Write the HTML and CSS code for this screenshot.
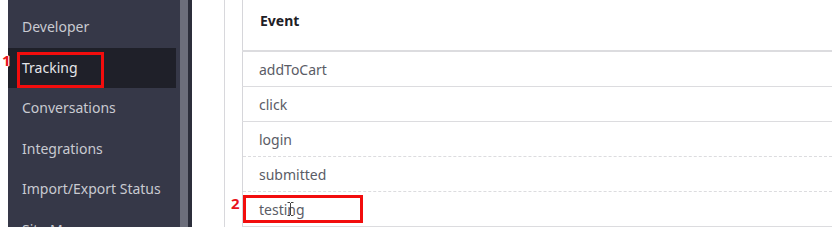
FILE: index.html
```html
<!DOCTYPE html>
<html lang="en">
<head>
    <meta charset="UTF-8">
    <title>Tracking - Events</title>
    <link rel="stylesheet" href="styles.css">
</head>
<body>
    <div class="edge"></div>

    <!-- Sidebar navigation -->
    <nav class="sidebar">
        <ul class="nav-list">
            <li class="nav-item">Developer</li>
            <li class="nav-item active">
                Tracking
                <span class="step step-1">1</span>
                <span class="mark mark-1"></span>
            </li>
            <li class="nav-item">Conversations</li>
            <li class="nav-item">Integrations</li>
            <li class="nav-item">Import/Export Status</li>
            <li class="nav-item">Site Map</li>
        </ul>
    </nav>
    <div class="scrollbar"></div>

    <!-- Events table -->
    <main class="content">
        <div class="panel">
            <table class="events">
                <thead>
                    <tr><th>Event</th></tr>
                </thead>
                <tbody>
                    <tr><td>addToCart</td></tr>
                    <tr><td>click</td></tr>
                    <tr class="dashed"><td>login</td></tr>
                    <tr class="dashed"><td>submitted</td></tr>
                    <tr>
                        <td>
                            testing
                            <svg class="caret" width="7" height="14" viewBox="0 0 7 14">
                                <path d="M0.5 0.5h2.5M4 0.5h2.5M3.5 1v12M0.5 13.5h2.5M4 13.5h2.5" stroke="#444" stroke-width="1" fill="none"/>
                            </svg>
                            <span class="step step-2">2</span>
                            <span class="mark mark-2"></span>
                        </td>
                    </tr>
                </tbody>
            </table>
        </div>
    </main>
</body>
</html>
```

FILE: styles.css
```css
body {
    margin: 0;
    padding: 0;
    display: flex;
    height: 227px;
    overflow: hidden;
    background-color: #ffffff;
    font-family: "Noto Sans", Arial, sans-serif;
}

.edge {
    width: 8px;
    flex-shrink: 0;
    background-color: #ffffff;
}

.sidebar {
    width: 172px;
    flex-shrink: 0;
    background-color: #363848;
}

.nav-list {
    list-style: none;
    margin: 0;
    padding: 7px 0 0 0;
}

.nav-item {
    position: relative;
    height: 40.5px;
    line-height: 40px;
    padding-left: 14px;
    font-size: 14px;
    color: #c9cad1;
    white-space: nowrap;
}

.nav-item.active {
    background-color: #1f2029;
    margin-right: 4px;
    color: #e4e5ea;
}

.scrollbar {
    width: 8px;
    flex-shrink: 0;
    background-color: #6c6e7b;
    border-right: 4px solid #2c2e3b;
}

.content {
    flex: 1;
    padding-left: 32px;
    background-color: #ffffff;
}

.panel {
    height: 100%;
    border-left: 1px solid #d8d8dc;
    padding-left: 17px;
}

.events {
    width: 100%;
    border-collapse: collapse;
    border-left: 1px solid #d6d6da;
}

.events th {
    height: 51px;
    padding: 0 0 10px 17px;
    text-align: left;
    font-size: 14px;
    font-weight: bold;
    color: #1e2026;
    border-bottom: 2px solid #dcdcdf;
    box-sizing: border-box;
}

.events td {
    position: relative;
    height: 34px;
    padding: 0 0 0 16px;
    font-size: 14px;
    color: #5a5c66;
    border-bottom: 1px solid #dcdcdf;
}

.events tr.dashed td {
    border-bottom: 1px dashed #dcdcdf;
}

/* annotation overlays */
.step {
    position: absolute;
    font-size: 15px;
    font-weight: bold;
    line-height: 1;
    color: #e8141b;
    text-shadow: 1px 0 0 #fff, -1px 0 0 #fff, 0 1px 0 #fff, 0 -1px 0 #fff;
}

.step-1 {
    left: -6px;
    top: 5px;
}

.step-2 {
    left: -12px;
    top: 4px;
}

.mark {
    position: absolute;
    border: 3px solid #f20d0d;
}

.mark-1 {
    left: 9px;
    top: 4px;
    width: 81px;
    height: 30px;
}

.mark-2 {
    left: 0;
    top: 3px;
    width: 114px;
    height: 22px;
}

.caret {
    position: absolute;
    left: 44px;
    top: 10px;
}
```
